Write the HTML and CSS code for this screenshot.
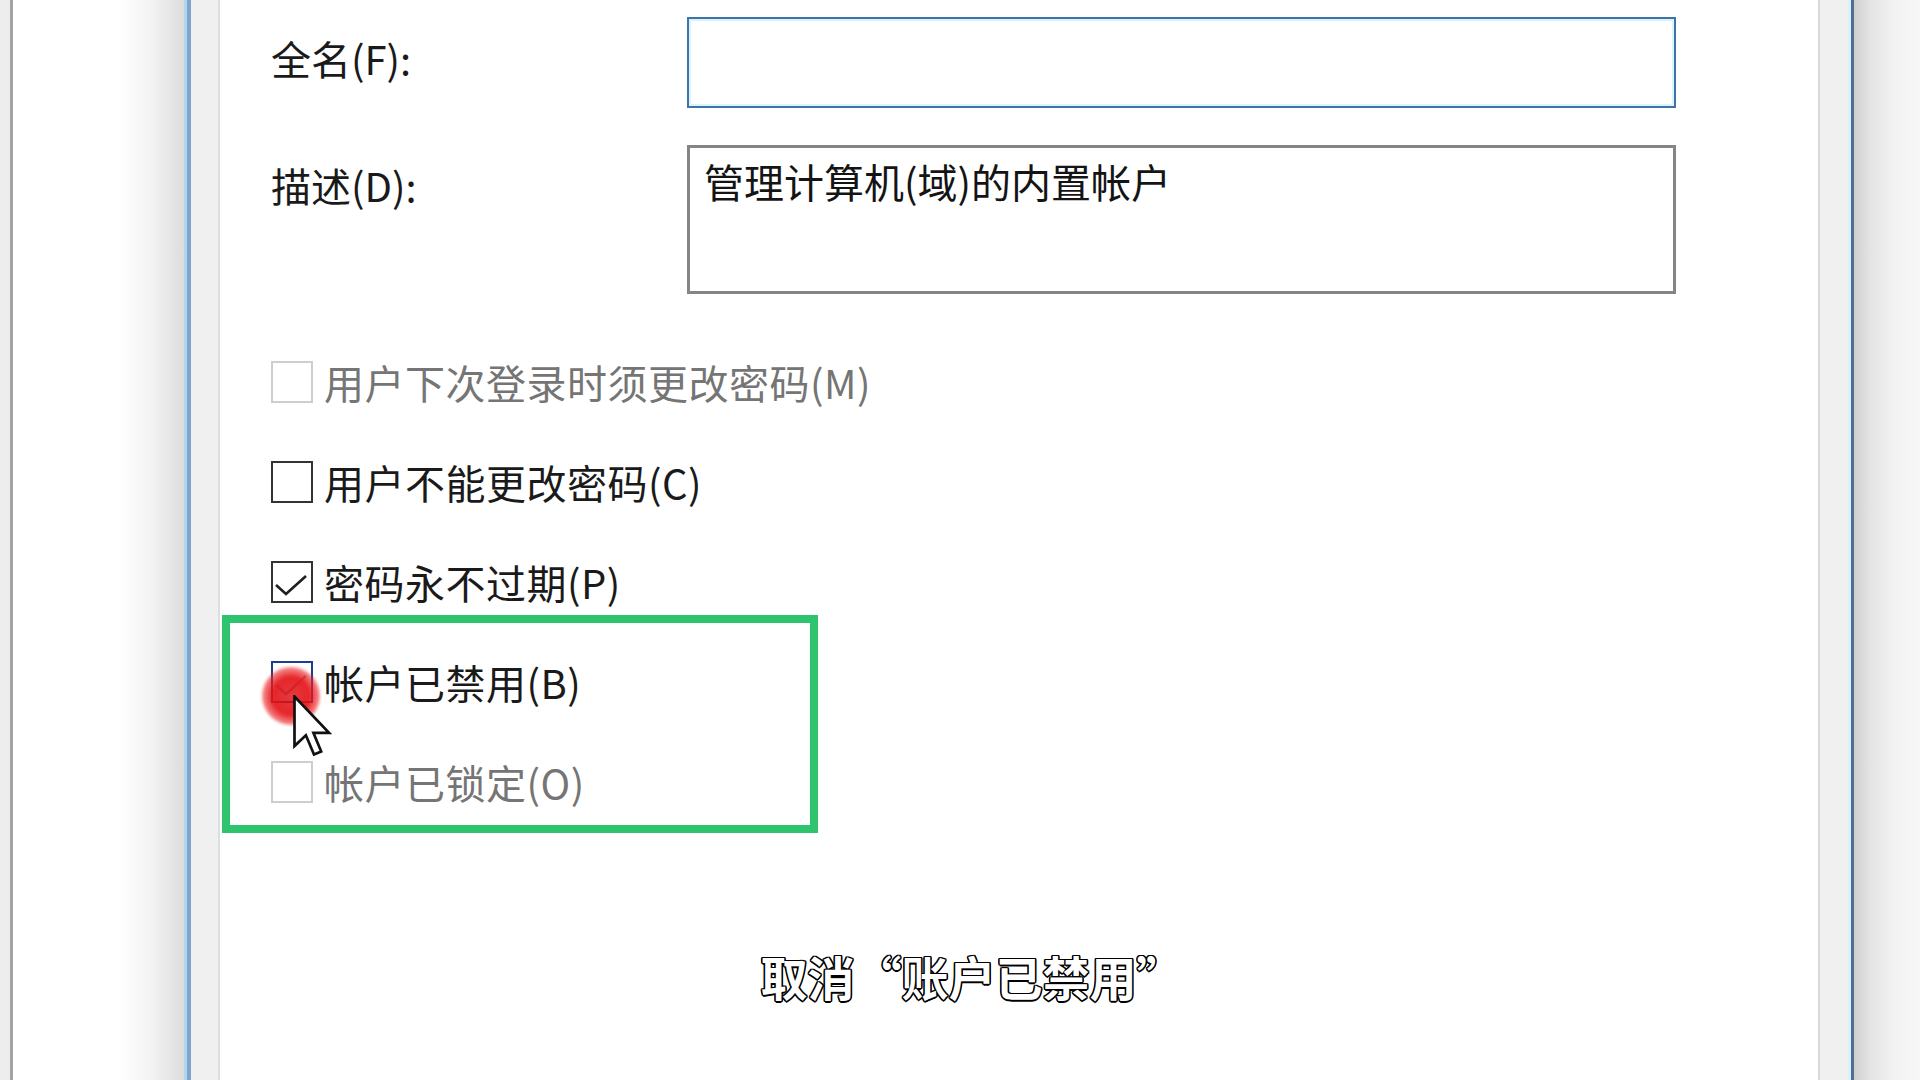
FILE: index.html
```html
<!DOCTYPE html>
<html lang="zh-CN">

<head>
    <meta charset="UTF-8">
    <meta name="viewport" content="width=device-width, initial-scale=1.0">
    <title>Administrator 属性</title>
    <link rel="stylesheet" href="styles.css">
</head>

<body>
    <div class="screen">
        <!-- window behind the dialog -->
        <div class="back-window">
            <div class="back-strip"></div>
            <div class="back-line"></div>
            <div class="back-body"></div>
        </div>

        <div class="dialog">
            <div class="dialog-frame">
                <div class="dialog-content">
                    <div class="form-grid">
                        <div class="field-label">全名(F):</div>
                        <div class="text-input focused"></div>
                        <div class="field-label top">描述(D):</div>
                        <div class="text-area">管理计算机(域)的内置帐户</div>
                    </div>

                    <div class="check-list">
                        <div class="check-row disabled">
                            <span class="box"></span>
                            <span class="check-text">用户下次登录时须更改密码(M)</span>
                        </div>
                        <div class="check-row">
                            <span class="box"></span>
                            <span class="check-text">用户不能更改密码(C)</span>
                        </div>
                        <div class="check-row">
                            <span class="box">
                                <svg viewBox="0 0 38 38"><polyline points="3,22 13,31 33,13" /></svg>
                            </span>
                            <span class="check-text">密码永不过期(P)</span>
                        </div>
                        <div class="check-row hover">
                            <span class="box">
                                <svg viewBox="0 0 38 38"><polyline points="3,22 13,31 33,13" /></svg>
                            </span>
                            <span class="check-text">帐户已禁用(B)</span>
                        </div>
                        <div class="check-row disabled">
                            <span class="box"></span>
                            <span class="check-text">帐户已锁定(O)</span>
                        </div>
                    </div>

                    <div class="highlight"></div>
                </div>
            </div>
        </div>

        <div class="shadow-right"></div>

        <!-- click marker and mouse pointer -->
        <div class="click-ring"></div>
        <svg class="cursor" viewBox="0 0 13 21">
            <path d="M0.5 0.5 L0.5 17 L4.3 13.4 L7 19.8 L9.4 18.8 L6.8 12.6 L12 12.6 Z" />
        </svg>

        <div class="subtitle">取消“账户已禁用”</div>
    </div>
</body>

</html>
```

FILE: styles.css
```css
* {
    margin: 0;
    padding: 0;
    box-sizing: border-box;
}

body {
    font-family: "Noto Sans CJK SC", "Noto Sans", sans-serif;
    background: #fff;
    color: #1a1a1a;
    overflow: hidden;
}

.screen {
    position: relative;
    display: flex;
    width: 1920px;
    height: 1080px;
    overflow: hidden;
}

/* left window behind */
.back-window {
    display: flex;
    width: 184px;
}

.back-strip {
    width: 10px;
    background: #ededed;
}

.back-line {
    width: 3px;
    background: #a3a3a3;
}

.back-body {
    flex: 1;
    background: linear-gradient(to right, #fff 0%, #fff 62%, #f2f2f2 82%, #dcdcdc 100%);
}

/* dialog */
.dialog {
    flex: 1;
    display: flex;
    border-left: 3px solid #b7d4ee;
    border-right: 3px solid #4f7096;
}

.dialog-frame {
    flex: 1;
    display: flex;
    border-left: 4px solid #7ea4d0;
    border-right: 3px solid #d8f1fb;
    background: #f1f0f0;
    padding: 0 28px 0 27px;
}

.dialog-content {
    position: relative;
    flex: 1;
    background: #fff;
    border-left: 2px solid #dedede;
    border-right: 2px solid #dadada;
    padding: 17px 0 0 51px;
}

.shadow-right {
    width: 66px;
    background: linear-gradient(to right, #cfcfcf 0%, #e4e4e4 25%, #f2f2f2 60%, #f7f7f7 100%);
}

/* top fields */
.form-grid {
    display: grid;
    grid-template-columns: 416px 989px;
    grid-template-rows: 91px 149px;
    row-gap: 37px;
}

.field-label {
    font-size: 40px;
    line-height: 48px;
    align-self: center;
    padding-bottom: 10px;
    color: #1a1a1a;
}

.field-label.top {
    align-self: start;
    padding: 16px 0 0;
}

.text-input {
    border: 2px solid #3f73a8;
    box-shadow: inset 0 0 0 2px #d9f4fd;
    background: #fff;
}

.text-area {
    border: 3px solid #858585;
    background: #fff;
    padding: 9px 0 0 14px;
    font-size: 40px;
    line-height: 48px;
    color: #141414;
}

/* checkboxes */
.check-list {
    display: flex;
    flex-direction: column;
    gap: 58px;
    margin-top: 67px;
}

.check-row {
    display: flex;
    align-items: center;
    gap: 11px;
    height: 42px;
}

.box {
    display: block;
    width: 42px;
    height: 42px;
    border: 2px solid #333;
    background: #fff;
    flex-shrink: 0;
}

.box svg {
    display: block;
    width: 100%;
    height: 100%;
}

.box polyline {
    fill: none;
    stroke: #1f1f1f;
    stroke-width: 2.6;
}

.check-text {
    font-size: 40px;
    line-height: 48px;
    letter-spacing: 0.5px;
    white-space: nowrap;
}

.check-row.disabled .box {
    border-color: #cdcdcd;
}

.check-row.disabled .check-text {
    color: #757575;
}

.check-row.hover .box {
    border-color: #1f3d8e;
}

.check-row.hover polyline {
    stroke: #8d9fc2;
}

/* annotation box */
.highlight {
    position: absolute;
    left: 2px;
    top: 615px;
    width: 596px;
    height: 218px;
    border: 8px solid #2ec46d;
}

.click-ring {
    position: absolute;
    left: 262px;
    top: 667px;
    width: 58px;
    height: 58px;
    border-radius: 50%;
    background: radial-gradient(circle, rgba(220, 10, 15, 0.8) 0%, rgba(228, 18, 22, 0.92) 45%, rgba(236, 35, 35, 0.6) 65%, rgba(245, 80, 80, 0) 100%);
    filter: blur(1.5px);
}

.cursor {
    position: absolute;
    left: 293px;
    top: 695px;
    width: 39px;
    height: 63px;
}

.cursor path {
    fill: #fff;
    stroke: #111;
    stroke-width: 0.9;
    stroke-linejoin: miter;
}

/* video subtitle */
.subtitle {
    position: absolute;
    left: 0;
    top: 948px;
    width: 1920px;
    padding-left: 24px;
    text-align: center;
    font-size: 47px;
    line-height: 56px;
    font-weight: 700;
    color: #fff;
    text-shadow:
        1.5px 0 0 #000, -1.5px 0 0 #000, 0 1.5px 0 #000, 0 -1.5px 0 #000,
        1.2px 1.2px 0 #000, -1.2px -1.2px 0 #000, 1.2px -1.2px 0 #000, -1.2px 1.2px 0 #000;
}
```
